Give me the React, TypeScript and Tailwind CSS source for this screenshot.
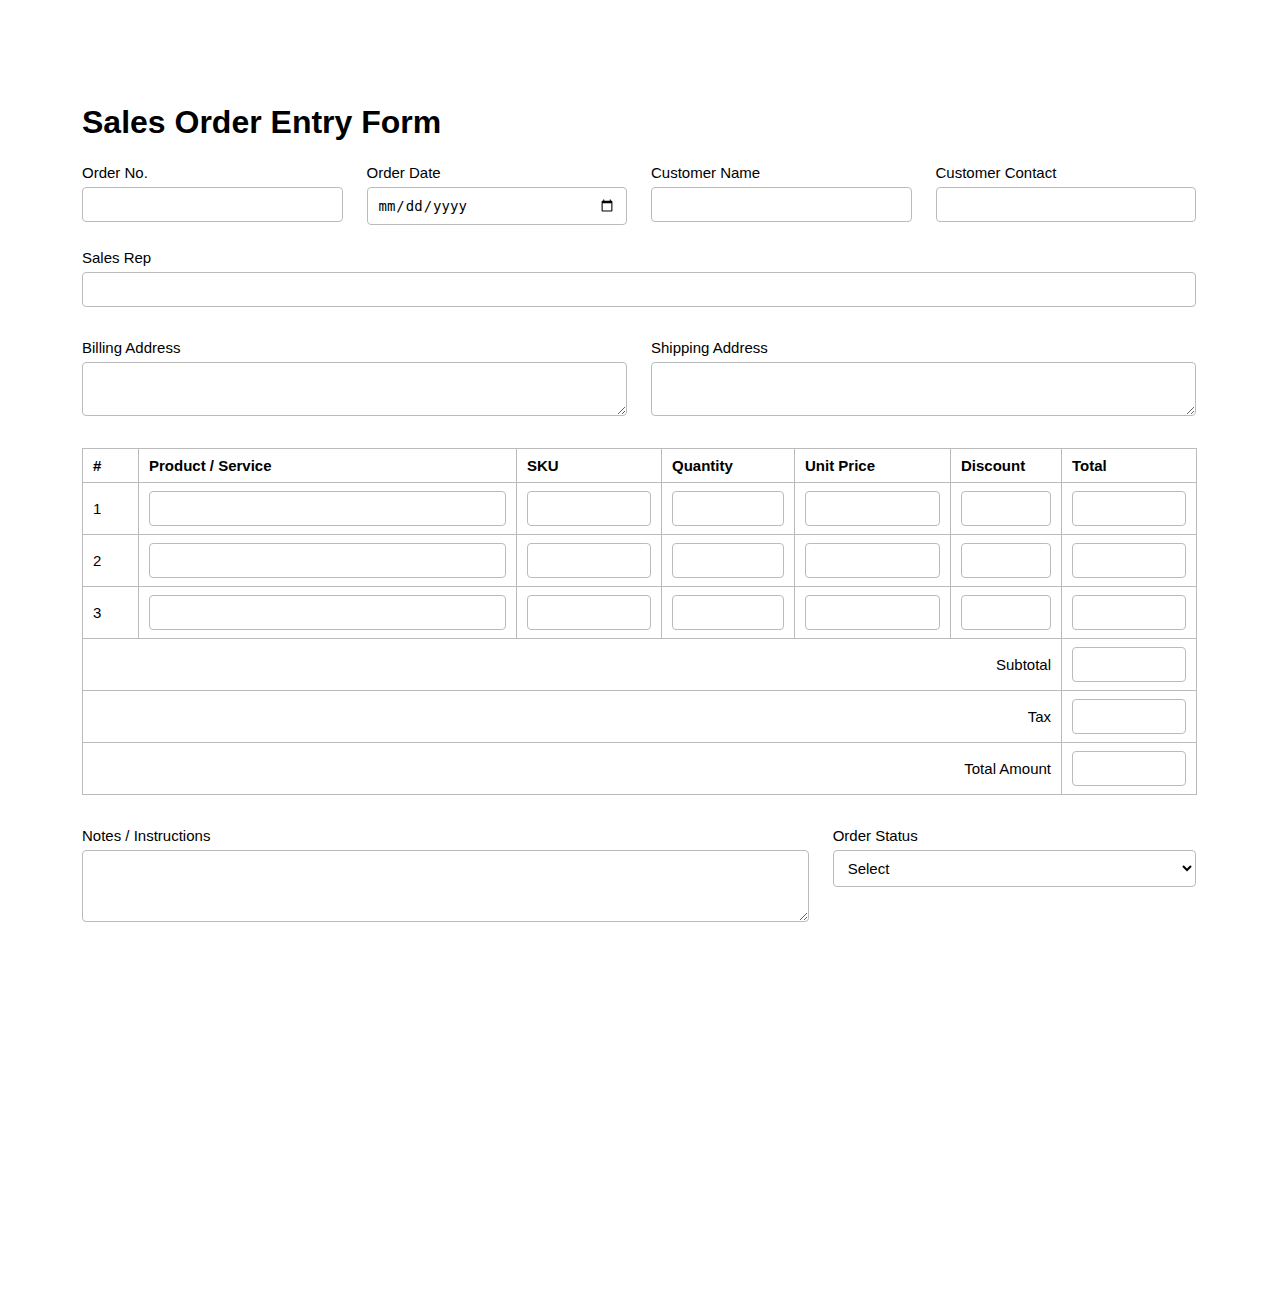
import React from "react";

const field =
  "block w-full h-[35px] rounded border border-[#bbb] bg-white px-2.5 py-2 text-[15px] leading-[17px] text-black outline-none";
const label = "block mb-1.5 text-[15px] leading-[17px] text-black";
const cell = "border border-[#bbb] px-2.5 py-2 align-middle";

function Field({ name, type = "text" }: { name: string; type?: string }) {
  return (
    <div>
      <label className={label}>{name}</label>
      {type === "date" ? (
        <input
          type="date"
          className="block w-full h-[38px] rounded border border-[#bbb] bg-white px-2.5 text-[14px] text-black outline-none font-['DejaVu_Sans_Mono',monospace]"
        />
      ) : (
        <input type={type} className={field} />
      )}
    </div>
  );
}

function AreaField({ name, height }: { name: string; height: string }) {
  return (
    <div>
      <label className={label}>{name}</label>
      <textarea
        className={`block w-full ${height} rounded border border-[#bbb] bg-white px-2.5 py-2 text-[15px] text-black outline-none`}
      />
    </div>
  );
}

const columns = ["#", "Product / Service", "SKU", "Quantity", "Unit Price", "Discount", "Total"];
const widths = ["w-[56px]", "w-[378px]", "w-[145px]", "w-[133px]", "w-[156px]", "w-[111px]", "w-[135px]"];

export default function App() {
  return (
    <div className="min-h-screen bg-white font-['Liberation_Sans',Arial,sans-serif] text-black">
      <div className="mx-auto w-[1114px] pt-[104px] pb-20">
        <h1 className="text-[32px] leading-[37px] font-bold mb-[23px]">Sales Order Entry Form</h1>

        {/* order details */}
        <div className="grid grid-cols-4 gap-6 mb-8">
          <Field name="Order No." />
          <Field name="Order Date" type="date" />
          <Field name="Customer Name" />
          <Field name="Customer Contact" />
          <div className="col-span-4">
            <Field name="Sales Rep" />
          </div>
        </div>

        {/* addresses */}
        <div className="grid grid-cols-2 gap-6 mb-8">
          <AreaField name="Billing Address" height="h-[54px]" />
          <AreaField name="Shipping Address" height="h-[54px]" />
        </div>

        {/* line items */}
        <table className="w-[1113px] table-fixed border-collapse border border-[#bbb] text-[15px] leading-[17px] mb-8">
          <colgroup>
            {widths.map((w, i) => (
              <col key={i} className={w} />
            ))}
          </colgroup>
          <thead>
            <tr>
              {columns.map((c) => (
                <th key={c} className={`${cell} text-left font-bold`}>
                  {c}
                </th>
              ))}
            </tr>
          </thead>
          <tbody>
            {[1, 2, 3].map((n) => (
              <tr key={n}>
                <td className={cell}>{n}</td>
                {columns.slice(1).map((c) => (
                  <td key={c} className={cell}>
                    <input type="text" className={field} />
                  </td>
                ))}
              </tr>
            ))}
            {["Subtotal", "Tax", "Total Amount"].map((t) => (
              <tr key={t}>
                <td colSpan={6} className={`${cell} text-right`}>
                  {t}
                </td>
                <td className={cell}>
                  <input type="text" className={field} />
                </td>
              </tr>
            ))}
          </tbody>
        </table>

        {/* notes + status */}
        <div className="grid grid-cols-[2fr_1fr] gap-6">
          <AreaField name="Notes / Instructions" height="h-[72px]" />
          <div>
            <label className={label}>Order Status</label>
            <select className="block w-full h-[37px] rounded border border-[#bbb] bg-white px-2.5 text-[15px] text-black outline-none">
              <option>Select</option>
              <option>Pending</option>
              <option>Confirmed</option>
              <option>Shipped</option>
              <option>Delivered</option>
              <option>Cancelled</option>
            </select>
          </div>
        </div>
      </div>
    </div>
  );
}
